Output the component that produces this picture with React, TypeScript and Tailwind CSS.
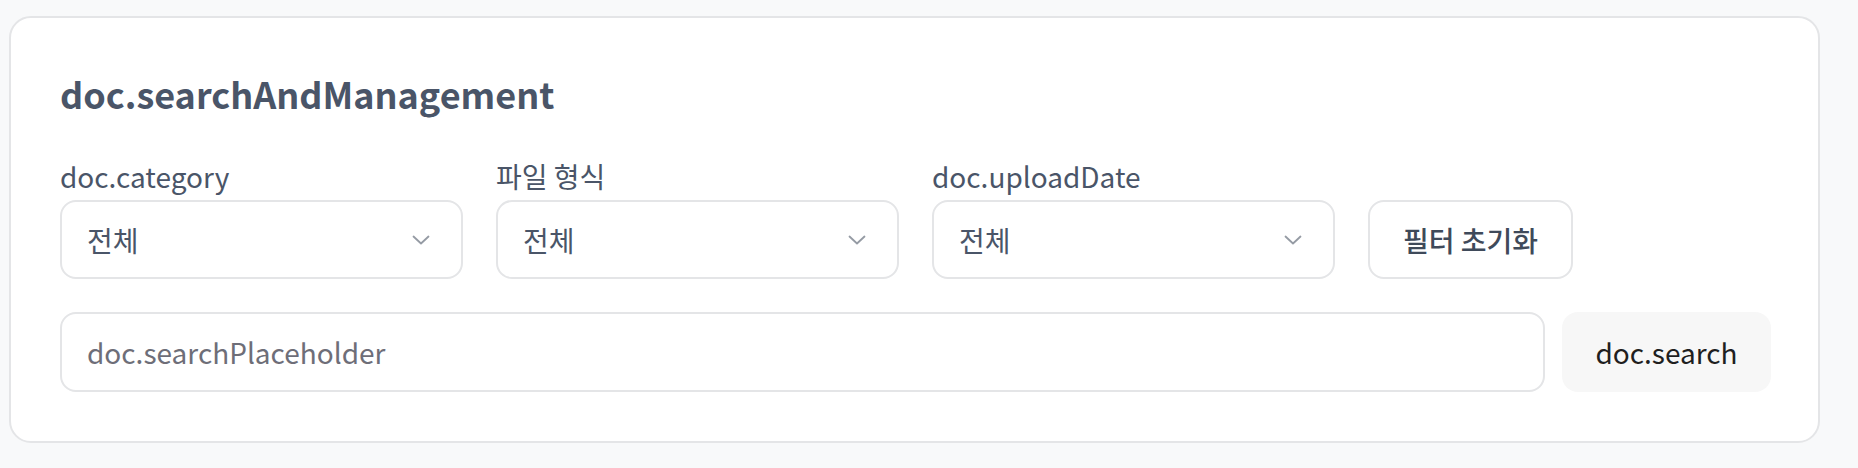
import React from "react";

const font = { fontFamily: '"Noto Sans CJK KR", "Noto Sans", sans-serif' };

function Chevron() {
  return (
    <svg width="18" height="10" viewBox="0 0 18 10" fill="none" className="shrink-0">
      <path d="M1.5 1.5L9 8.5L16.5 1.5" stroke="#959ba4" strokeWidth="1.8" strokeLinecap="round" strokeLinejoin="round" />
    </svg>
  );
}

function Select({ label }: { label: string }) {
  return (
    <div className="flex w-[403px] flex-col gap-[7px]">
      <label className="text-[28px] leading-[34px] text-[#4a5568]">{label}</label>
      <button className="flex h-[79px] w-full items-center justify-between rounded-[16px] border-2 border-[#e4e5e7] bg-white pl-[25px] pr-[31px] text-[28px] text-[#4a5568]">
        <span>전체</span>
        <Chevron />
      </button>
    </div>
  );
}

export default function App() {
  return (
    <div className="min-h-[468px] w-full bg-[#f8f9fa] pl-[9px] pt-[16px]" style={font}>
      <div className="w-[1811px] rounded-[22px] border-2 border-[#e4e5e7] bg-white pb-[49px] pl-[49px] pr-[47px] pt-[53px]">
        <h2 className="text-[36px] font-bold leading-[44px] text-[#4a5568]">doc.searchAndManagement</h2>
        <div className="mt-[44px] flex items-end gap-[33px]">
          <Select label="doc.category" />
          <Select label="파일 형식" />
          <Select label="doc.uploadDate" />
          <button className="h-[79px] rounded-[16px] border-2 border-[#e4e5e7] bg-white px-[33px] text-[28px] font-medium text-[#3f4a5a]">
            필터 초기화
          </button>
        </div>
        <div className="mt-[33px] flex gap-[17px]">
          <input
            className="h-[80px] min-w-0 flex-1 rounded-[16px] border-2 border-[#e4e5e7] bg-white pl-[25px] text-[28px] text-[#4a5568] outline-none placeholder:text-[#6e6e78]"
            placeholder="doc.searchPlaceholder"
          />
          <button className="h-[80px] w-[209px] rounded-[16px] bg-[#f7f7f7] text-[28px] text-[#1f1f1f]">
            doc.search
          </button>
        </div>
      </div>
    </div>
  );
}
